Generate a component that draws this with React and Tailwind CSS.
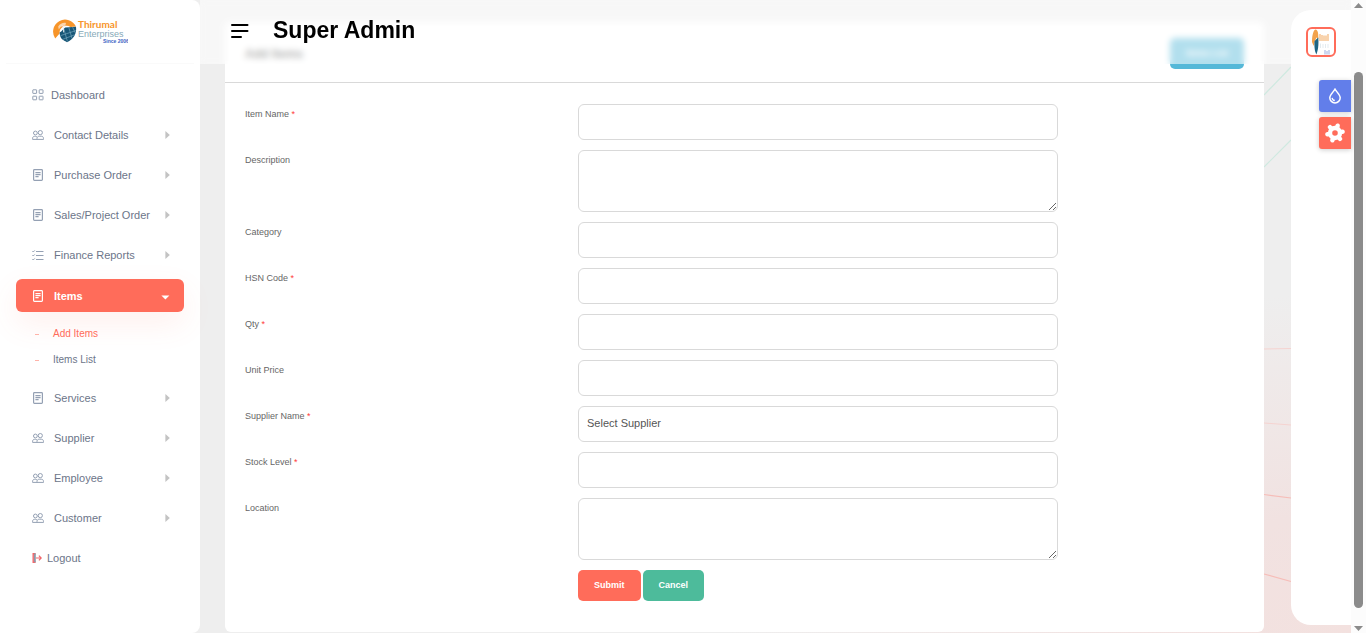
import React from "react";

function GridIcon() {
  return (
    <svg viewBox="0 0 12 12" className="h-3 w-3" fill="none" stroke="currentColor">
      <rect x="0.8" y="0.8" width="3.8" height="3.6" rx="0.3" />
      <rect x="7.2" y="0.8" width="3.8" height="3.6" rx="0.3" />
      <rect x="0.8" y="7.2" width="3.8" height="3.6" rx="0.3" />
      <rect x="7.2" y="7.2" width="3.8" height="3.6" rx="0.3" />
    </svg>
  );
}

function UsersIcon() {
  return (
    <svg viewBox="0 0 12 12" className="h-3 w-3" fill="none" stroke="currentColor">
      <circle cx="3.4" cy="4" r="1.9" />
      <circle cx="8.3" cy="3.6" r="2.1" />
      <path d="M0.6 10.4V9.2C0.6 8 1.5 7.3 2.6 7.3H3.6C4.4 7.3 4.9 7.7 5.1 8.2M0.6 10.4H11.5V9.4C11.5 8 10.5 7.2 9.3 7.2H7.2C6 7.2 5 8 5 9.4V10.4" />
    </svg>
  );
}

function DocIcon() {
  return (
    <svg viewBox="0 0 12 12" className="h-3 w-3" fill="none" stroke="currentColor" strokeWidth="1.2">
      <rect x="1.6" y="0.6" width="8.8" height="10.8" rx="0.8" />
      <path d="M3.4 3.6H8.6M3.4 5.6H8.6M3.4 7.6H6.6" />
    </svg>
  );
}

function ListIcon() {
  return (
    <svg viewBox="0 0 12 12" className="h-3 w-3" fill="none" stroke="currentColor">
      <path d="M4 2.5H11.5M4 6.5H11.5M4 10.5H11.5" />
      <path d="M0.4 2.2L1.2 3L2.8 1.4M0.4 6.2L1.2 7L2.8 5.4M0.4 10.2L1.2 11L2.8 9.4" />
    </svg>
  );
}

function LogoutIcon() {
  return (
    <svg viewBox="0 0 10 10" className="h-[10px] w-[10px]" fill="none">
      <path d="M3.6 0.7H1.2V9.3H3.6" stroke="#f0676b" strokeWidth="1.4" />
      <path d="M2.9 0.6V9.2" stroke="#8e97a8" strokeWidth="1.8" />
      <path d="M4 5H9M6.9 2.7L9.2 5L6.9 7.3" stroke="#f0676b" strokeWidth="1.2" />
    </svg>
  );
}

function Caret() {
  return (
    <svg viewBox="0 0 5 8" className="h-2 w-[5px] text-[#c3c3c3]" fill="currentColor">
      <path d="M0.4 0L4.8 4L0.4 8Z" />
    </svg>
  );
}

function CaretDown() {
  return (
    <svg viewBox="0 0 9 5" className="mt-1 h-[5px] w-[9px]" fill="currentColor">
      <path d="M0.4 0.4H8.4L4.4 4.6Z" />
    </svg>
  );
}

function BrandLogo() {
  return (
    <svg viewBox="0 0 76 28" className="h-7 w-[76px]" role="img" aria-label="Thirumal Enterprises">
      <path d="M3.2 21.4A12 12 0 1 1 24 9.6L18.4 9.9A7 7 0 0 0 7.6 16.4Z" fill="#f7952a" />
      <path d="M6.2 9.4C8.2 6.6 11 5.4 14 6L13.4 8.2C10.5 8.4 8.5 9.4 6.8 12.4Z" fill="#fff" opacity="0.6" />
      <path d="M7.6 15.6C10 14.6 11.4 11.4 13.2 10.4L24 9.8C25 16.6 21.6 22.4 15 25.2C12.4 23.4 8 23.4 7.6 15.6Z" fill="#175676" />
      <path d="M8.6 18.6L24 13.6M10.6 22.4L22.6 17.8M12 12.4L15.4 24.4M16.8 10.4L20 21.4M20.6 10.2L23.4 16" stroke="#7fb0c6" strokeWidth="0.6" />
      <path d="M11.6 9V15.4M9.6 9H13.6" stroke="#f3f3f3" strokeWidth="0.9" />
      <text x="26" y="11" fontSize="10" fontWeight="700" fill="#f7952a" fontFamily="Lato, sans-serif">Thirumal</text>
      <text x="26" y="20" fontSize="9" fill="#86a9b8" fontFamily="'Liberation Sans', sans-serif">Enterprises</text>
      <text x="51" y="26" fontSize="5" fontWeight="700" fill="#3b63c4" fontFamily="'Liberation Sans', sans-serif">Since 2006</text>
    </svg>
  );
}

function AvatarPicture() {
  return (
    <svg viewBox="0 0 26 26" className="h-[26px] w-[26px]" aria-hidden="true">
      <path d="M4 13C4 5 6 0.6 7.6 0.6C9.6 0.6 10.6 4 10.4 10L8.4 8.6L7 12L5.6 17Z" fill="#f2a24c" />
      <path d="M6.6 12L10.2 8.6C11 16 9.8 22 8.4 25.4C6.8 23 6 17 6.6 12Z" fill="#1f6684" />
      <path d="M12 5V12M14 6V12M16 6.5V12M18 6.5V12M20 5V12" stroke="#f6c08a" strokeWidth="1.4" />
      <path d="M12.5 14.5V19M15 15V19M17.5 15V19M20 15V19" stroke="#e3ebef" />
      <path d="M17 21V25.6M19 22V25.6M21 21V25.6" stroke="#b9c6ea" strokeWidth="1.4" />
    </svg>
  );
}

const upperItems = [
  { label: "Contact Details", icon: UsersIcon },
  { label: "Purchase Order", icon: DocIcon },
  { label: "Sales/Project Order", icon: DocIcon },
  { label: "Finance Reports", icon: ListIcon },
];

const lowerItems = [
  { label: "Services", icon: DocIcon },
  { label: "Supplier", icon: UsersIcon },
  { label: "Employee", icon: UsersIcon },
  { label: "Customer", icon: UsersIcon },
];

function NavGroup({ label, icon: Icon }) {
  return (
    <li>
      <a href="#" className="flex h-[33px] items-center pr-[14px] pl-4">
        <span className="text-[#94a0b3]"><Icon /></span>
        <span className="ml-[10px] flex-1">{label}</span>
        <Caret />
      </a>
    </li>
  );
}

function Sidebar() {
  return (
    <aside className="z-30 w-[200px] shrink-0 rounded-r-lg bg-white">
      <div className="mx-[6px] flex h-16 items-start justify-center border-b border-[#fafafa] pt-[17px]">
        <a href="#" className="-ml-5"><BrandLogo /></a>
      </div>
      <nav className="px-4 pt-[14px] text-[11px] leading-4 text-[#6c7589]">
        <ul className="flex flex-col gap-[7px]">
          <li>
            <a href="#" className="flex h-[33px] items-center gap-[7px] px-4">
              <span className="text-[#94a0b3]"><GridIcon /></span>
              Dashboard
            </a>
          </li>
          {upperItems.map((item) => <NavGroup key={item.label} {...item} />)}
          <li className="my-px">
            <a href="#" className="flex h-[33px] items-center rounded-md bg-[#ff6c5a] pr-[14px] pl-4 font-bold text-white shadow-[0_12px_30px_rgba(255,108,90,0.1)]">
              <DocIcon />
              <span className="ml-[10px] flex-1">Items</span>
              <CaretDown />
            </a>
            <ul className="pt-[9px] text-[10px]">
              {["Add Items", "Items List"].map((label, i) => (
                <li key={label}>
                  <a href="#" className={i === 0 ? "flex h-[26px] items-center pl-[19px] text-[#ff6c5a]" : "flex h-[26px] items-center pl-[19px]"}>
                    <span className="mr-[14px] h-px w-1 bg-[#ffb3a9]" />
                    {label}
                  </a>
                </li>
              ))}
            </ul>
          </li>
          {lowerItems.map((item) => <NavGroup key={item.label} {...item} />)}
          <li>
            <a href="#" className="flex h-[33px] items-center gap-[5px] px-4">
              <LogoutIcon />
              Logout
            </a>
          </li>
        </ul>
      </nav>
    </aside>
  );
}

const fields = [
  { id: "item-name", label: "Item Name", required: true },
  { id: "description", label: "Description", kind: "area" },
  { id: "category", label: "Category" },
  { id: "hsn", label: "HSN Code", required: true },
  { id: "qty", label: "Qty", required: true },
  { id: "unit-price", label: "Unit Price" },
  { id: "supplier", label: "Supplier Name", required: true, kind: "select" },
  { id: "stock", label: "Stock Level", required: true },
  { id: "location", label: "Location", kind: "area" },
];

const control = "block w-full rounded-md border border-[#d9d9d9] bg-white px-2 text-[11px] text-[#555]";

function Control({ id, kind }) {
  if (kind === "area") return <textarea id={id} className={control + " h-[62px] py-2"} />;
  if (kind === "select") {
    return (
      <select id={id} className={control + " h-9 appearance-none pb-[2px]"}>
        <option>Select Supplier</option>
      </select>
    );
  }
  return <input id={id} type="text" className={control + " h-9"} />;
}

function ItemCard() {
  return (
    <section className="mt-[22px] mb-px min-w-0 flex-1 rounded-md bg-white">
      <div className="flex h-[61px] items-start justify-between border-b border-[#d9d9d9] px-5 pt-4">
        <h4 className="pt-2 text-[12px] leading-4 font-bold text-[#555]">Add Items</h4>
        <button type="button" className="h-[31px] rounded-[5px] bg-[#55b8d8] px-4 text-[9px] font-bold text-white">Items List</button>
      </div>
      <form className="flex flex-col gap-[10px] px-5 pt-[21px] pb-[31px]" onSubmit={(e) => e.preventDefault()}>
        {fields.map((f) => (
          <div key={f.id} className="grid grid-cols-12 items-start">
            <label htmlFor={f.id} className="col-span-4 text-[9px] leading-5 text-[#666]">
              {f.label}
              {f.required && <span className="text-[#ff3b3b]"> *</span>}
            </label>
            <div className="col-span-6 pr-5"><Control {...f} /></div>
          </div>
        ))}
        <div className="grid grid-cols-12">
          <div className="col-span-6 col-start-5 flex gap-[2px] text-[9px] font-bold text-white">
            <button type="submit" className="h-[31px] rounded-[5px] bg-[#ff6c5a] px-4">Submit</button>
            <button type="button" className="h-[31px] rounded-[5px] bg-[#4dbb9b] px-4">Cancel</button>
          </div>
        </div>
      </form>
    </section>
  );
}

function Backdrop() {
  return (
    <svg viewBox="0 0 110 633" className="absolute top-0 right-0 h-[633px] w-[110px]" fill="none" aria-hidden="true">
      <path d="M23 95L50 67M23 167L50 140" stroke="#cfe9e0" strokeWidth="1.2" />
      <path d="M23 349L50 348.5M23 423L50 425" stroke="#f5d3d0" />
      <path d="M23 494.5L50 498M23 574L50 581.5" stroke="#f6bdb8" strokeWidth="1.2" />
    </svg>
  );
}

function SidePanel() {
  return (
    <div className="z-20 mt-[10px] mb-2 flex w-[60px] shrink-0 flex-col rounded-l-[20px] bg-white pt-[17px]">
      <button type="button" aria-label="Profile" className="mb-[23px] self-center overflow-hidden rounded-md border-2 border-[#ff6c5a]">
        <AvatarPicture />
      </button>
      <div className="flex flex-col gap-[5px] self-end text-white">
        <button type="button" aria-label="Theme colour" className="flex h-8 w-8 items-center justify-center rounded-l-[3px] bg-[#627eea] shadow-[0_1px_5px_rgba(0,0,0,0.2)]">
          <svg viewBox="0 0 12 16" className="h-4 w-3" fill="none" stroke="currentColor" strokeWidth="1.5">
            <path d="M6 1.2C7.6 4 11.2 6.8 11.2 9.8A5.2 5.1 0 0 1 0.8 9.8C0.8 6.8 4.4 4 6 1.2Z" />
            <path d="M3.1 9.8C3.3 11.4 4.2 12.4 5.8 12.5" strokeWidth="1.3" />
          </svg>
        </button>
        <button type="button" aria-label="Settings" className="flex h-8 w-8 items-center justify-center rounded-l-[3px] bg-[#ff6c5a] shadow-[0_1px_5px_rgba(0,0,0,0.2)]">
          <svg viewBox="0 0 20 20" className="h-5 w-5" fill="none" stroke="currentColor">
            <circle cx="10" cy="10" r="5" strokeWidth="4.4" />
            <path d="M12.1 4.2L12.6 2.7M16.1 8.9L17.6 8.7M14 14.7L15 15.9M7.9 15.8L7.4 17.3M3.9 11.1L2.4 11.3M6 5.3L5 4.1" strokeWidth="4.4" strokeLinecap="round" />
          </svg>
        </button>
      </div>
    </div>
  );
}

function ScrollTrack() {
  return (
    <div className="flex w-[15px] shrink-0 flex-col items-center bg-[#fcfcfc] text-[#8b8b8b]" aria-hidden="true">
      <svg viewBox="0 0 9 5" className="mt-[3px] h-[5px] w-[9px]" fill="currentColor"><path d="M4.5 0L9 5H0Z" /></svg>
      <div className="mt-16 w-[9px] flex-1 rounded-full bg-[#8b8b8b]" />
      <svg viewBox="0 0 9 5" className="mt-[18px] mb-[2px] h-[5px] w-[9px]" fill="currentColor"><path d="M4.5 5L9 0H0Z" /></svg>
    </div>
  );
}

export default function App() {
  return (
    <div className="flex min-h-screen bg-[#eee] font-['Liberation_Sans',Arial,sans-serif]">
      <Sidebar />
      <main className="relative flex min-w-0 flex-1 bg-[radial-gradient(ellipse_620px_340px_at_100%_100%,#f3e1df_0%,#f1e2e1_35%,#eee_100%)] pl-[25px]">
        <Backdrop />
        <div className="z-0 mr-[27px] flex min-w-0 flex-1"><ItemCard /></div>
        <header className="absolute inset-x-0 top-0 z-10 flex h-16 items-start bg-white/55 pt-4 pl-[31px] backdrop-blur-[3px]">
          <button type="button" aria-label="Toggle menu" className="mt-[7px]">
            <svg viewBox="0 0 18 16" className="h-4 w-[18px]" fill="none" stroke="#000" strokeWidth="2" strokeLinecap="round">
              <path d="M1 2H16.5M1 8H16.5M1 14H10" />
            </svg>
          </button>
          <h1 className="ml-6 text-[23px] leading-7 font-bold text-black">Super Admin</h1>
        </header>
        <SidePanel />
      </main>
      <ScrollTrack />
    </div>
  );
}
